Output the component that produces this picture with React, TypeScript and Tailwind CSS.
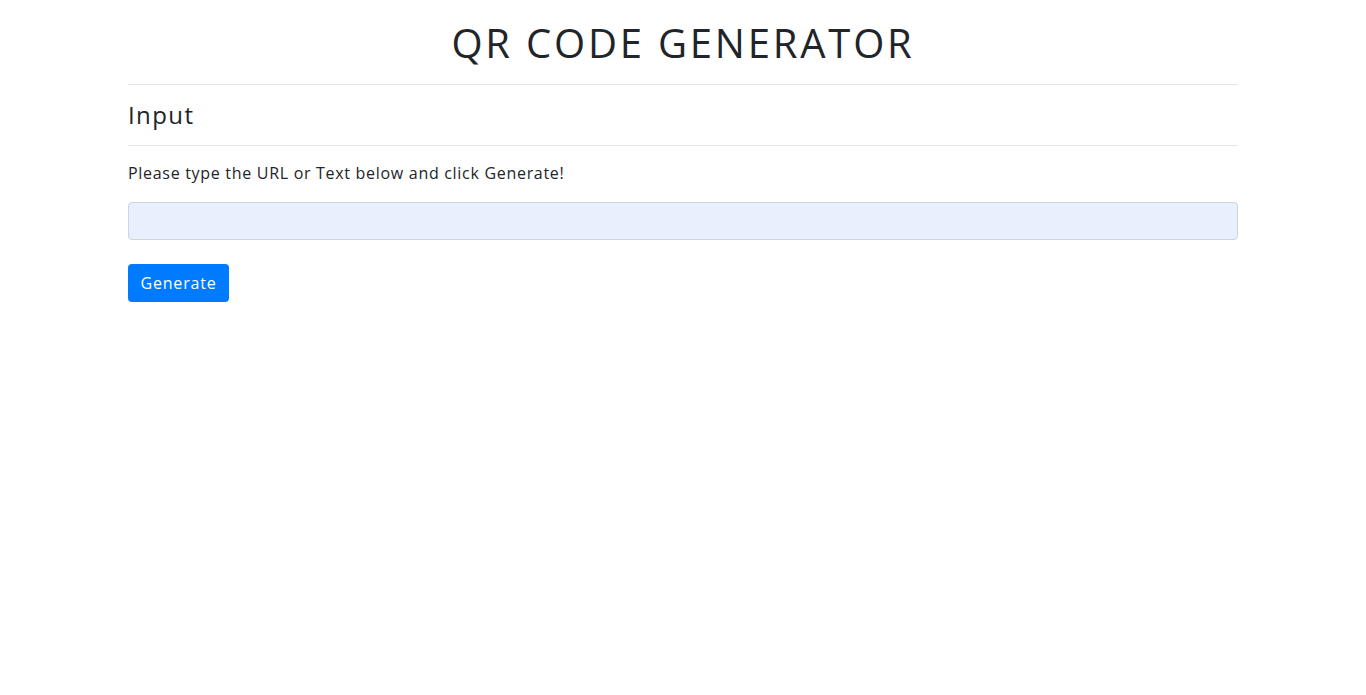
export default function App() {
  return (
    <div className="min-h-[695px] bg-white text-[#212529]" style={{ fontFamily: '"Open Sans", "Noto Sans", sans-serif' }}>
      <div className="mx-auto w-[1110px]">
        <h1 className="text-center text-[40px] leading-[48px] pt-[19px] pb-[17px] font-normal tracking-[2.8px]">QR CODE GENERATOR</h1>
        <div className="h-px bg-[#e5e5e5]" />
        <h3 className="text-[24px] leading-[28px] py-[16px] font-normal tracking-[1.4px]">Input</h3>
        <div className="h-px bg-[#e5e5e5]" />
        <p className="text-[16px] leading-[24px] mt-[15px] tracking-[0.7px]">Please type the URL or Text below and click Generate!</p>
        <input className="mt-[17px] block w-full h-[38px] rounded-[4px] border border-[#ced4da] bg-[#e8f0fe] px-3 outline-none" />
        <button className="mt-[24px] h-[38px] w-[101px] rounded-[4px] bg-[#007bff] text-white text-[16px] font-medium tracking-[0.8px]">Generate</button>
      </div>
    </div>
  );
}
